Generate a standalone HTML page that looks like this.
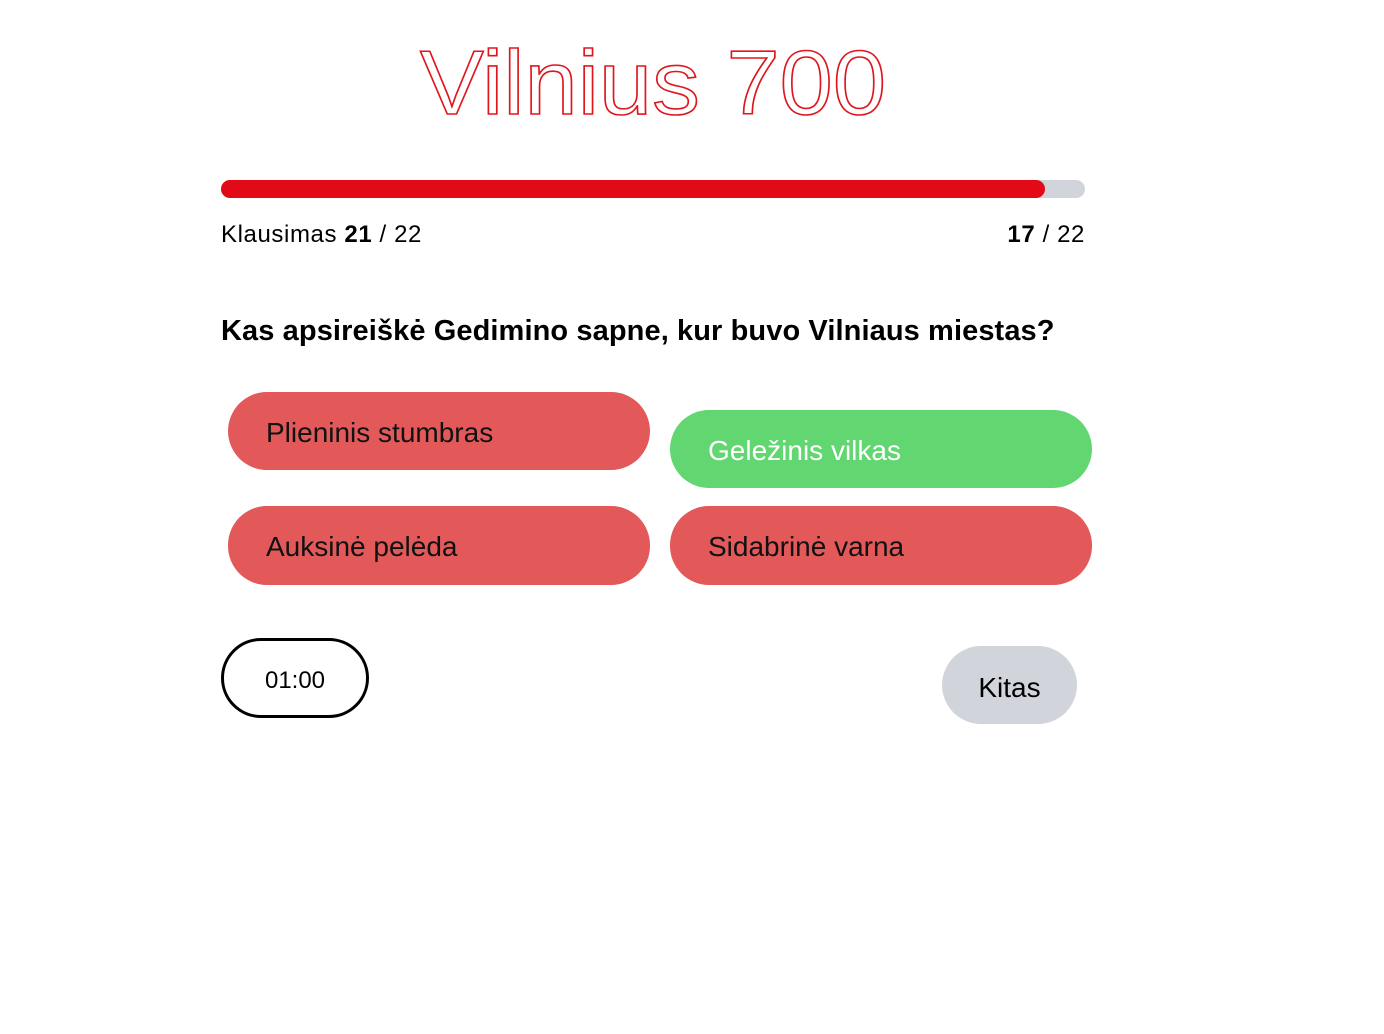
<!DOCTYPE html>
<html><head><meta charset="utf-8"><style>
body{margin:0;width:1384px;height:1034px;background:#fff;font-family:"Liberation Sans","DejaVu Sans",sans-serif;color:#000;position:relative;overflow:hidden}
.a{position:absolute}
.pill{position:absolute;width:422px;height:78px;border-radius:39px;background:#e35959;font-size:28px;line-height:82px;box-sizing:border-box;padding-left:38px;color:#111}
</style></head><body>
<svg class="a" style="left:0;top:0" width="1384" height="140">
<text x="420" y="114" font-family="Liberation Sans, DejaVu Sans, sans-serif" font-size="91" textLength="466" lengthAdjust="spacingAndGlyphs" fill="none" stroke="#e0161e" stroke-width="1.6">Vilnius 700</text>
</svg>
<div class="a" style="left:221px;top:180px;width:864px;height:18px;border-radius:9px;background:#d1d5db"></div>
<div class="a" style="left:221px;top:180px;width:824px;height:18px;border-radius:9px;background:#e20a17"></div>
<div class="a" style="left:221px;top:221px;font-size:24px;letter-spacing:0.6px">Klausimas <b>21</b> / 22</div>
<div class="a" style="right:299px;top:221px;font-size:24px;letter-spacing:0.6px"><b>17</b> / 22</div>
<div class="a" style="left:221px;top:315px;font-size:29px;font-weight:bold;letter-spacing:0.1px">Kas apsireiškė Gedimino sapne, kur buvo Vilniaus miestas?</div>
<div class="pill" style="left:228px;top:392px">Plieninis stumbras</div>
<div class="pill" style="left:670px;top:410px;background:#62d671;color:#fff">Geležinis vilkas</div>
<div class="pill" style="left:228px;top:506px;height:79px">Auksinė pelėda</div>
<div class="pill" style="left:670px;top:506px;height:79px">Sidabrinė varna</div>
<div class="a" style="left:221px;top:638px;width:148px;height:80px;box-sizing:border-box;border:3px solid #000;border-radius:40px;text-align:center;line-height:80px;font-size:24px">01:00</div>
<div class="a" style="left:942px;top:646px;width:135px;height:78px;border-radius:39px;background:#d1d5db;text-align:center;line-height:84px;font-size:28px">Kitas</div>
</body></html>
